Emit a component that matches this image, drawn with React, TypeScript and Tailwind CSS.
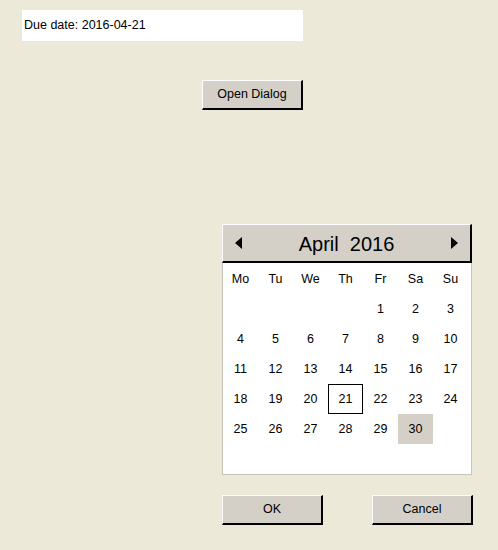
import { useState } from "react";

const WEEKDAYS = ["Mo", "Tu", "We", "Th", "Fr", "Sa", "Su"];

// April 2016 starts on a Friday (Monday-first grid), 6 rows total
function buildWeeks(): (number | null)[][] {
  const cells: (number | null)[] = [null, null, null, null];
  for (let d = 1; d <= 30; d++) cells.push(d);
  while (cells.length < 42) cells.push(null);
  const weeks: (number | null)[][] = [];
  for (let i = 0; i < 42; i += 7) weeks.push(cells.slice(i, i + 7));
  return weeks;
}

function ClassicButton({ label, className = "" }: { label: string; className?: string }) {
  return (
    <button
      className={`h-[30px] w-[101px] bg-[#d4d0c8] border-t border-l border-t-white border-l-white border-b-2 border-r-2 border-b-black border-r-black text-[12.5px] text-black ${className}`}
    >
      {label}
    </button>
  );
}

export default function App() {
  const [selected, setSelected] = useState(21);
  const weeks = buildWeeks();

  return (
    <div
      className="w-[498px] h-[550px] bg-[#ece9d8] flex flex-col text-black"
      style={{ fontFamily: '"Liberation Sans", Arial, sans-serif' }}
    >
      {/* Due date field */}
      <div className="ml-[22px] mt-[10px] w-[281px] h-[31px] bg-white flex items-center pl-[2px] text-[12.5px]">
        Due date: 2016-04-{String(selected).padStart(2, "0")}
      </div>

      <div className="ml-[202px] mt-[39px]">
        <ClassicButton label="Open Dialog" />
      </div>

      {/* Calendar */}
      <div className="ml-[222px] mt-[114px] w-[251px] flex flex-col">
        <div className="h-[39px] w-[250px] bg-[#d4d0c8] border-t border-l border-t-white border-l-white border-b-2 border-r-2 border-b-black border-r-black flex items-center justify-between px-[12px]">
          <svg width="7" height="12" viewBox="0 0 7 12">
            <path d="M7 0 L0 6 L7 12 Z" fill="black" />
          </svg>
          <span className="text-[20px] leading-none pt-[1px]">April&nbsp;&nbsp;2016</span>
          <svg width="7" height="12" viewBox="0 0 7 12">
            <path d="M0 0 L7 6 L0 12 Z" fill="black" />
          </svg>
        </div>
        <div className="w-[250px] bg-white border border-[#c8c4bc] border-t-0 h-[212px] text-[12.5px] pt-[1px]">
          <div className="grid grid-cols-[repeat(7,35px)]">
            {WEEKDAYS.map((w) => (
              <div key={w} className="h-[30px] flex items-center justify-center">
                {w}
              </div>
            ))}
            {weeks.flat().map((d, i) => (
              <div
                key={i}
                onClick={() => d && setSelected(d)}
                className={`h-[30px] flex items-center justify-center ${
                  d === selected ? "border border-black" : ""
                } ${d === 30 ? "bg-[#d4d0c8]" : ""}`}
              >
                {d ?? ""}
              </div>
            ))}
          </div>
        </div>

        <div className="mt-[20px] flex justify-between">
          <ClassicButton label="OK" />
          <ClassicButton label="Cancel" />
        </div>
      </div>
    </div>
  );
}
